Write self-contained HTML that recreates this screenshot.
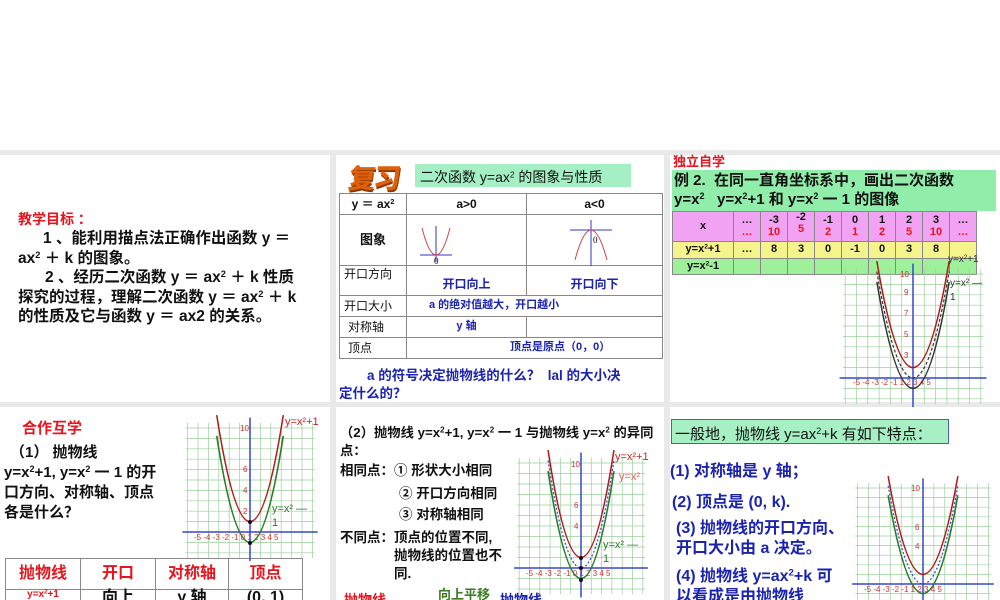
<!DOCTYPE html>
<html><head><meta charset="utf-8"><style>
*{margin:0;padding:0;box-sizing:border-box}
html,body{width:1000px;height:600px;overflow:hidden}
body{background:#fff;font-family:"Liberation Sans","Noto Sans CJK SC",sans-serif;font-weight:bold;color:#111}
#w{position:relative;width:1000px;height:600px;overflow:hidden}
.g{position:absolute;background:#e9e9e9}
.t{position:absolute;white-space:nowrap}
.r{color:#e8141e}.b{color:#1b23b0}
sup{font-size:60%;vertical-align:0.55em;line-height:0}
table{position:absolute;border-collapse:collapse;table-layout:fixed}
td{border:1px solid #888;text-align:center;padding:0;line-height:1.05}
</style></head><body><div id="w">
<div class="g" style="left:0;top:150px;width:1000px;height:5px"></div>
<div class="g" style="left:0;top:402px;width:1000px;height:5px"></div>
<div class="g" style="left:330px;top:150px;width:6px;height:450px"></div>
<div class="g" style="left:664px;top:150px;width:6px;height:450px"></div>

<!-- Panel 1 -->
<div class="t r" style="left:18px;top:209px;font-size:14px">教学目标 ：</div>
<div style="position:absolute;left:18px;top:229px;width:310px;font-size:15.5px;line-height:19.6px;white-space:nowrap">
<div style="padding-left:25px">1 、能利用描点法正确作出函数 y ＝</div>
<div>ax<sup>2</sup> ＋ k 的图象。</div>
<div style="padding-left:27px">2 、经历二次函数 y ＝ ax<sup>2</sup> ＋ k 性质</div>
<div>探究的过程，理解二次函数 y ＝ ax<sup>2</sup> ＋ k</div>
<div>的性质及它与函数 y ＝ ax2 的关系。</div>
</div>

<!-- Panel 2 -->
<div class="t" style="left:349px;top:157px;font-size:27px;color:#e0600a;font-weight:900;letter-spacing:-2px;text-shadow:1px 2px 0 #8a3a00;transform:skewX(-8deg)">复习</div>
<div class="t" style="left:415px;top:164px;width:216px;height:23px;background:#a4f0c4;font-size:14px;font-weight:normal;padding:3px 0 0 5px">二次函数 y=ax<sup>2</sup> 的图象与性质</div>
<table style="left:339px;top:193px;width:324px;font-size:12px">
<col style="width:67px"><col style="width:120px"><col>
<tr style="height:21px"><td>y ＝ ax<sup>2</sup></td><td>a&gt;0</td><td>a&lt;0</td></tr>
<tr style="height:51px"><td style="font-size:13px">图象</td><td></td><td></td></tr>
<tr style="height:30px"><td style="text-align:left;vertical-align:top;padding:2px 4px;font-weight:normal">开口方向</td><td class="b" style="vertical-align:bottom;padding-bottom:4px">开口向上</td><td class="b" style="vertical-align:bottom;padding-bottom:4px">开口向下</td></tr>
<tr style="height:21px"><td style="text-align:left;padding-left:4px;font-weight:normal">开口大小</td><td colspan="2" class="b" style="text-align:left;padding-left:22px;font-size:11px">a 的绝对值越大，开口越小</td></tr>
<tr style="height:21px"><td style="text-align:left;padding-left:8px;font-weight:normal">对称轴</td><td class="b" style="font-size:11px">y 轴</td><td></td></tr>
<tr style="height:21px"><td style="text-align:left;padding-left:8px;font-weight:normal">顶点</td><td colspan="2" class="b" style="text-align:left;padding-left:103px;font-size:11px">顶点是原点（0，0）</td></tr>
</table>
<div class="t b" style="left:339px;top:367px;font-size:13.5px;line-height:18px"><span style="padding-left:28px">a 的符号决定抛物线的什么？&nbsp;&nbsp;lal 的大小决</span><br>定什么的？</div>

<!-- Panel 3 -->
<div class="t r" style="left:673px;top:154px;font-size:13px;line-height:15px">独立自学</div>
<div style="position:absolute;left:672px;top:170px;width:324px;height:41px;background:#90eeaa;font-size:15px;line-height:19px;padding:1px 0 0 2px;white-space:nowrap">例 2.&nbsp;&nbsp;在同一直角坐标系中，画出二次函数<br>y=x<sup>2</sup>&nbsp;&nbsp;&nbsp;y=x<sup>2</sup>+1 和 y=x<sup>2</sup> 一 1 的图像</div>
<table style="left:672px;top:211px;width:304px;font-size:11px">
<col style="width:61px"><col style="width:27px"><col style="width:27px"><col style="width:27px"><col style="width:27px"><col style="width:27px"><col style="width:27px"><col style="width:27px"><col style="width:27px"><col style="width:27px">
<tr style="height:30px;background:#f2a2f2"><td>x</td><td>…<br><span class="r">…</span></td><td>-3<br><span class="r">10</span></td><td style="vertical-align:top">-2<br><span class="r">5</span></td><td>-1<br><span class="r">2</span></td><td>0<br><span class="r">1</span></td><td>1<br><span class="r">2</span></td><td>2<br><span class="r">5</span></td><td>3<br><span class="r">10</span></td><td>…<br><span class="r">…</span></td></tr>
<tr style="height:17px;background:#f5f38c"><td>y=x<sup>2</sup>+1</td><td>…</td><td>8</td><td>3</td><td>0</td><td>-1</td><td>0</td><td>3</td><td>8</td><td></td></tr>
<tr style="height:16px;background:#9ef09a"><td>y=x<sup>2</sup>-1</td><td></td><td></td><td></td><td></td><td></td><td></td><td></td><td></td><td></td></tr>
</table>

<!-- Panel 4 -->
<div class="t r" style="left:22px;top:417px;font-size:15px">合作互学</div>
<div style="position:absolute;left:4px;top:443px;font-size:15px;line-height:20px;white-space:nowrap">
<div style="padding-left:6px">（1） 抛物线</div>
<div>y=x<sup>2</sup>+1, y=x<sup>2</sup> 一 1 的开</div>
<div>口方向、对称轴、顶点</div>
<div>各是什么？</div></div>
<table style="left:5px;top:558px;width:298px;font-size:16px">
<col style="width:75px"><col style="width:75px"><col style="width:73px"><col>
<tr style="height:31px" class="r"><td>抛物线</td><td>开口</td><td>对称轴</td><td>顶点</td></tr>
<tr style="height:31px;vertical-align:top"><td class="r" style="font-size:10px">y=x<sup>2</sup>+1</td><td>向上</td><td>y 轴</td><td>(0, 1)</td></tr>
</table>

<!-- Panel 5 -->
<div style="position:absolute;left:340px;top:424px;font-size:13.3px;line-height:18px;white-space:nowrap">（2）抛物线 y=x<sup>2</sup>+1, y=x<sup>2</sup> 一 1 与抛物线 y=x<sup>2</sup> 的异同<br>点：</div>
<div class="t" style="left:340px;top:459px;font-size:13.5px">相同点：① 形状大小相同</div>
<div class="t" style="left:399px;top:482px;font-size:13.5px">② 开口方向相同</div>
<div class="t" style="left:399px;top:503px;font-size:13.5px">③ 对称轴相同</div>
<div class="t" style="left:340px;top:529px;font-size:13.5px;line-height:18px">不同点：顶点的位置不同,<br>　　　　抛物线的位置也不<br>　　　　同.</div>
<div class="t r" style="left:344px;top:590px;font-size:14px">抛物线</div>
<div class="t" style="left:438px;top:584px;font-size:13px;color:#3a7a20">向上平移</div>
<div class="t b" style="left:500px;top:590px;font-size:14px">抛物线</div>

<!-- Panel 6 -->
<div class="t" style="left:671px;top:419px;width:278px;height:25px;background:#a6f0c4;border:1.5px solid #4a5ae0;font-size:15px;font-weight:normal;padding:3px 0 0 3px">一般地，抛物线 y=ax<sup>2</sup>+k 有如下特点：</div>
<div class="t b" style="left:670px;top:457px;font-size:16px">(1) 对称轴是 y 轴；</div>
<div class="t b" style="left:672px;top:488px;font-size:16px">(2) 顶点是 (0, k).</div>
<div class="t b" style="left:676px;top:519px;font-size:16px;line-height:20px">(3) 抛物线的开口方向、<br>开口大小由 a 决定。</div>
<div class="t b" style="left:676px;top:567px;font-size:16px;line-height:20px">(4) 抛物线 y=ax<sup>2</sup>+k 可<br>以看成是由抛物线</div>

<svg style="position:absolute;left:0;top:0" width="1000" height="600" viewBox="0 0 1000 600">
<defs>
<path id="grid" d="M-5 -2.5V10.5M-4 -2.5V10.5M-3 -2.5V10.5M-2 -2.5V10.5M-1 -2.5V10.5M1 -2.5V10.5M2 -2.5V10.5M3 -2.5V10.5M4 -2.5V10.5M5 -2.5V10.5M6 -2.5V10.5M-6 -2.5V10.5M-6.2 -2H6.2M-6.2 -1H6.2M-6.2 1H6.2M-6.2 2H6.2M-6.2 3H6.2M-6.2 4H6.2M-6.2 5H6.2M-6.2 6H6.2M-6.2 7H6.2M-6.2 8H6.2M-6.2 9H6.2M-6.2 10H6.2" fill="none" stroke="#9ccf9c" stroke-width="0.7" vector-effect="non-scaling-stroke"/>
<path id="ax" d="M-6.5 0H6.5M0 -2.8V11" fill="none" stroke="#3347d0" stroke-width="1.5" vector-effect="non-scaling-stroke"/>
<path id="p1" d="M-3.2 11.24Q0 -9.24 3.2 11.24" fill="none" stroke="#b01818" stroke-width="1.5" vector-effect="non-scaling-stroke"/>
<path id="p0" d="M-3.2 10.24Q0 -10.24 3.2 10.24" fill="none" stroke="#333" stroke-width="1.2" stroke-dasharray="3 2" vector-effect="non-scaling-stroke"/>
<path id="p0b" d="M-3.2 10.24Q0 -10.24 3.2 10.24" fill="none" stroke="#3347d0" stroke-width="1.2" stroke-dasharray="2 2" vector-effect="non-scaling-stroke"/>
<path id="pm" d="M-3.2 9.24Q0 -11.24 3.2 9.24" fill="none" stroke="#2a7a2a" stroke-width="1.6" vector-effect="non-scaling-stroke"/>
<path id="pmk" d="M-3.2 9.24Q0 -11.24 3.2 9.24" fill="none" stroke="#333" stroke-width="1.5" vector-effect="non-scaling-stroke"/>
</defs>
<g fill="none" stroke-width="1"><path d="M420 255H452M436 226V262" stroke="#33c"/><path d="M422 228Q436 282 450 228" stroke="#c44"/>
<path d="M570 230H612M591 220V266" stroke="#33c"/><path d="M575 260Q591 200 607 260" stroke="#c44"/></g>
<text x="434" y="264" font-size="9" font-family="Liberation Serif" font-weight="normal">0</text>
<text x="593" y="243" font-size="9" font-family="Liberation Serif" font-weight="normal">0</text>
<g transform="translate(913 378) scale(11.3 -10.4)"><use href="#grid"/><use href="#ax"/><use href="#p1"/><use href="#p0"/><use href="#pmk"/></g>
<g font-size="8" fill="#c33" font-weight="normal" font-family="Liberation Sans"><text x="853" y="385">-5 -4 -3 -2 -1   1  2  3  4  5</text><text x="900" y="277">10</text><text x="904" y="295">9</text><text x="904" y="316">7</text><text x="904" y="337">5</text><text x="904" y="358">3</text></g>
<text x="948" y="262" font-size="10" font-weight="normal" fill="#333">y=x²+1</text><text x="950" y="286" font-size="10" font-weight="normal" fill="#333">y=x²  —</text><text x="950" y="300" font-size="10" font-weight="normal" fill="#333">1</text>
<g transform="translate(250 532) scale(10.4 -10.4)"><use href="#grid"/><use href="#ax"/><use href="#p1"/><use href="#pm"/></g>
<g font-size="8" fill="#c33" font-weight="normal"><text x="194" y="540">-5 -4 -3 -2 -1 0 1  2  3  4  5</text><text x="240" y="431">10</text><text x="243" y="472">6</text><text x="243" y="493">4</text><text x="243" y="514">2</text></g>
<text x="285" y="425" font-size="11" font-weight="normal" fill="#c22">y=x²+1</text><text x="272" y="512" font-size="11" font-weight="normal" fill="#2a7a2a">y=x²  —</text><text x="272" y="526" font-size="11" font-weight="normal" fill="#2a7a2a">1</text>
<circle cx="250" cy="522" r="2" fill="#111"/><circle cx="250" cy="543" r="2" fill="#111"/>
<g transform="translate(581 568) scale(10.3 -10.5)"><use href="#grid"/><use href="#ax"/><use href="#p1"/><use href="#p0b"/><use href="#pm"/></g>
<g font-size="8" fill="#c33" font-weight="normal"><text x="526" y="576">-5 -4 -3 -2 -1 0 1  2  3  4  5</text><text x="571" y="467">10</text><text x="574" y="508">6</text><text x="574" y="529">4</text></g>
<text x="615" y="460" font-size="11" font-weight="normal" fill="#c22">y=x²+1</text><text x="619" y="480" font-size="11" font-weight="normal" fill="#d66">y=x²</text><text x="603" y="548" font-size="11" font-weight="normal" fill="#2a7a2a">y=x²  —</text><text x="603" y="562" font-size="11" font-weight="normal" fill="#2a7a2a">1</text>
<circle cx="581" cy="558" r="2" fill="#111"/><circle cx="581" cy="568" r="2" fill="#111"/><circle cx="581" cy="580" r="2" fill="#111"/>
<g transform="translate(923 584) scale(10.9 -9.6)"><use href="#grid"/><use href="#ax"/><use href="#p1"/><use href="#p0b"/><use href="#pm"/></g>
<g font-size="8" fill="#c33" font-weight="normal"><text x="864" y="592">-5 -4 -3 -2 -1   1  2  3  4  5</text><text x="911" y="491">10</text><text x="915" y="530">6</text><text x="915" y="549">4</text></g>
</svg>
</div></body></html>
